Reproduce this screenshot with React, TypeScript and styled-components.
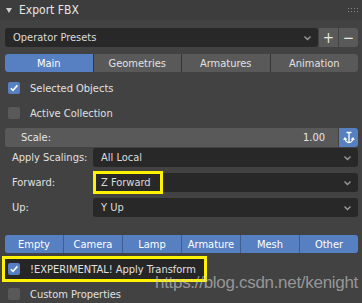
import styled, { createGlobalStyle } from 'styled-components'

const GlobalStyle = createGlobalStyle`
    html, body {
        margin: 0;
        padding: 0;
        background: #424242;
    }
`

const Panel = styled.div`
    position: relative;
    width: 362px;
    height: 303px;
    overflow: hidden;
    background: #424242;
    color: #e0e0e0;
    font-family: "DejaVu Sans Condensed", "DejaVu Sans", sans-serif;
    font-stretch: condensed;
    font-size: 11px;
`

const Header = styled.div`
    height: 20px;
    display: flex;
    align-items: center;
    gap: 7px;
    padding: 0 4px 0 6px;
    background: #3d3d3d;
    font-size: 12px;
    color: #e6e6e6;
`

const Title = styled.span`
    flex: 1;
`

const Body = styled.div`
    display: flex;
    flex-direction: column;
    padding: 0 4px 0 5px;
`

const Row = styled.div<{ $top: number }>`
    display: flex;
    align-items: center;
    margin-top: ${p => p.$top}px;
`

const Dropdown = styled.div<{ $grow?: boolean }>`
    position: relative;
    flex: 1;
    height: 19px;
    display: flex;
    align-items: center;
    padding: 0 6px 0 8px;
    box-sizing: border-box;
    background: #282828;
    border-radius: 3px;
    color: #dcdcdc;
    span {
        flex: 1;
    }
`

const SmallButton = styled.div`
    width: 19px;
    height: 19px;
    margin-left: 1px;
    display: flex;
    align-items: center;
    justify-content: center;
    background: #595959;
    color: #e8e8e8;
    font-size: 15px;
    &:last-child {
        border-radius: 0 3px 3px 0;
    }
`

const Segmented = styled.div<{ $height: number }>`
    flex: 1;
    display: flex;
    height: ${p => p.$height}px;
    border-radius: 3px;
    overflow: hidden;
    gap: 1px;
    background: #363636;
`

const Segment = styled.div<{ $active?: boolean; $blueSep?: boolean }>`
    flex: 1;
    display: flex;
    align-items: center;
    justify-content: center;
    background: ${p => (p.$active ? '#5680c2' : '#595959')};
    color: ${p => (p.$active ? '#ffffff' : '#e2e2e2')};
`

const TypeSegments = styled(Segmented)`
    background: #3f5f92;
`

const CheckRow = styled.div<{ $top: number }>`
    height: 20px;
    display: flex;
    align-items: center;
    gap: 10px;
    padding-left: 3px;
    margin-top: ${p => p.$top}px;
`

const Box = styled.div<{ $checked?: boolean }>`
    width: 12px;
    height: 12px;
    border-radius: 2px;
    background: ${p => (p.$checked ? '#5680c2' : '#595959')};
    display: flex;
    align-items: center;
    justify-content: center;
`

const Highlighted = styled.div`
    align-self: flex-start;
    display: flex;
    align-items: center;
    gap: 10px;
    height: 20px;
    margin: 3px 0 0 -3px;
    padding: 0 8px 0 3px;
    border: 3px solid #fff200;
    background: #262626;
`

const ScaleField = styled.div`
    flex: 1;
    height: 19px;
    display: flex;
    align-items: center;
    justify-content: space-between;
    padding: 0 13px 0 16px;
    box-sizing: border-box;
    background: #595959;
    border-radius: 3px 0 0 3px;
    color: #e6e6e6;
`

const BlueToggle = styled.div`
    width: 19px;
    height: 19px;
    margin-left: 1px;
    display: flex;
    align-items: center;
    justify-content: center;
    background: #5680c2;
    border-radius: 0 3px 3px 0;
`

const PropLabel = styled.span`
    width: 81px;
    padding-left: 7px;
    color: #e0e0e0;
`

const YellowMark = styled.div`
    position: absolute;
    left: 0;
    top: -2px;
    width: 70px;
    height: 23px;
    box-sizing: border-box;
    border: 3px solid #fff200;
`

const Watermark = styled.div`
    position: absolute;
    left: 155px;
    top: 273px;
    font-family: "Liberation Sans", Arial, sans-serif;
    font-stretch: normal;
    font-size: 17px;
    color: rgba(205, 205, 205, 0.62);
    letter-spacing: -0.3px;
`

const Chevron = () => (
    <svg width="9" height="6" viewBox="0 0 9 6">
        <path d="M1.5 1.5 L4.5 4.5 L7.5 1.5" fill="none" stroke="#9a9a9a" strokeWidth="1.4" />
    </svg>
)

const Check = () => (
    <svg width="10" height="10" viewBox="0 0 10 10">
        <path d="M1.8 5.2 L4 7.4 L8.4 2.4" fill="none" stroke="#ffffff" strokeWidth="1.6" />
    </svg>
)

const Select = ({ text, mark }: { text: string; mark?: boolean }) => (
    <Dropdown>
        {mark && <YellowMark />}
        <span>{text}</span>
        <Chevron />
    </Dropdown>
)

const Prop = ({ label, value, top, mark }: { label: string; value: string; top: number; mark?: boolean }) => (
    <Row $top={top}>
        <PropLabel>{label}</PropLabel>
        <Select text={value} mark={mark} />
    </Row>
)

const tabs = ['Main', 'Geometries', 'Armatures', 'Animation']
const types = ['Empty', 'Camera', 'Lamp', 'Armature', 'Mesh', 'Other']

export default function App() {
    return (
        <Panel>
            <GlobalStyle />
            <Header>
                <svg width="6" height="5" viewBox="0 0 6 5">
                    <path d="M0 0 H6 L3 5 Z" fill="#cfcfcf" />
                </svg>
                <Title>Export FBX</Title>
                <svg width="10" height="5" viewBox="0 0 10 5">
                    {[0, 3, 6, 9].map(x => (
                        <g key={x}>
                            <rect x={x} y={0} width="1" height="1" fill="#8a8a8a" />
                            <rect x={x} y={3} width="1" height="1" fill="#8a8a8a" />
                        </g>
                    ))}
                </svg>
            </Header>
            <Body>
                <Row $top={8}>
                    <Select text="Operator Presets" />
                    <SmallButton>+</SmallButton>
                    <SmallButton>−</SmallButton>
                </Row>
                <Row $top={7}>
                    <Segmented $height={18}>
                        {tabs.map((t, i) => (
                            <Segment key={t} $active={i === 0}>{t}</Segment>
                        ))}
                    </Segmented>
                </Row>
                <CheckRow $top={6}>
                    <Box $checked><Check /></Box>
                    <span>Selected Objects</span>
                </CheckRow>
                <CheckRow $top={5}>
                    <Box />
                    <span>Active Collection</span>
                </CheckRow>
                <Row $top={5}>
                    <ScaleField>
                        <span>Scale:</span>
                        <span>1.00</span>
                    </ScaleField>
                    <BlueToggle>
                        <svg width="12" height="13" viewBox="0 0 12 13">
                            <path d="M4 1.5 H8 M6 1.5 V11.5 M2 7 Q2.5 11.5 6 11.5 Q9.5 11.5 10 7 M1 8.5 L2 7 L3.2 8.3 M8.8 8.3 L10 7 L11 8.5"
                                fill="none" stroke="#ffffff" strokeWidth="1.3" strokeLinecap="round" />
                        </svg>
                    </BlueToggle>
                </Row>
                <Prop label="Apply Scalings:" value="All Local" top={1} />
                <Prop label="Forward:" value="Z Forward" top={6} mark />
                <Prop label="Up:" value="Y Up" top={6} />
                <Row $top={18}>
                    <TypeSegments $height={18}>
                        {types.map(t => (
                            <Segment key={t} $active>{t}</Segment>
                        ))}
                    </TypeSegments>
                </Row>
                <Highlighted>
                    <Box $checked><Check /></Box>
                    <span>!EXPERIMENTAL! Apply Transform</span>
                </Highlighted>
                <CheckRow $top={2}>
                    <Box />
                    <span>Custom Properties</span>
                </CheckRow>
            </Body>
            <Watermark>https://blog.csdn.net/kenight</Watermark>
        </Panel>
    )
}
